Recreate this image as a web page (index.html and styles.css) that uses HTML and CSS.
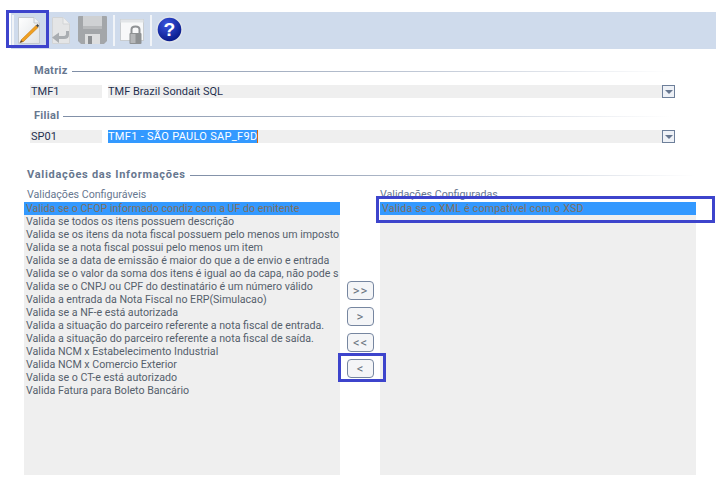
FILE: index.html
```html
<!DOCTYPE html>
<html lang="pt">
<head>
<meta charset="utf-8">
<title>Validações</title>
<link rel="stylesheet" href="styles.css">
</head>
<body>
<div class="page">
  <div class="toolbar">
    <span class="sep"></span>
    <svg class="tool tool-edit" width="22" height="27" viewBox="0 0 22 27">
      <defs><linearGradient id="pg" x1="0" y1="0" x2="1" y2="1"><stop offset="0" stop-color="#ffffff"/><stop offset="1" stop-color="#dfe3e6"/></linearGradient></defs>
      <path d="M.5 .5H16L21.500 6V26.500H.5Z" fill="url(#pg)" stroke="#c3c9cf"/>
      <path d="M16 .5V6H21.500" fill="#eef1f3" stroke="#c3c9cf"/>
      <path d="M3 23L18 8.500L20 10.500L5 25Z" fill="#f0a020" stroke="#c87a10" stroke-width=".6"/>
      <path d="M18 8.500L19.500 7L21 8.500L20 10.500Z" fill="#444"/>
      <path d="M1.500 26L3 23L5 25Z" fill="#6b4a20"/>
    </svg>
    <svg class="tool tool-undo" width="18" height="27" viewBox="0 0 18 27">
      <path d="M.5 .5H11L17.500 7V26.500H.5Z" fill="#e4e5e6" stroke="#d2d4d6"/>
      <path d="M11 .5V7H17.500" fill="#eeeeee" stroke="#d2d4d6"/>
      <path d="M17 14V18Q17 22 12 22H7V26L0 20.500L7 15.500V19H11Q14 19 14 17V14Z" fill="#a9adb1"/>
    </svg>
    <svg class="tool tool-save" width="29" height="28" viewBox="0 0 29 28">
      <path d="M0 1Q0 0 1 0H28Q29 0 29 1V25L26 28H3L0 25Z" fill="#a3a6a9"/>
      <rect x="5" y="0" width="19" height="13" fill="#cfd1d3"/>
      <rect x="5" y="10" width="19" height="3" fill="#b8babc"/>
      <rect x="7" y="18" width="15" height="10" fill="#dddedf"/>
      <rect x="10" y="20" width="4" height="8" fill="#8c8f92"/>
    </svg>
    <span class="sep"></span>
    <svg class="tool tool-lock" width="24" height="25" viewBox="0 0 24 25">
      <rect x=".5" y=".5" width="23" height="21" fill="#f7f8f9" stroke="#c8ccd0"/>
      <rect x=".5" y=".5" width="23" height="3" fill="#e2e5e8"/>
      <path d="M11.500 15V10.500Q11.500 7.500 15.500 7.500Q19.500 7.500 19.500 10.500V15" fill="none" stroke="#8f9295" stroke-width="2"/>
      <rect x="9.500" y="14" width="12" height="11" rx="1" fill="#8e9193"/>
      <rect x="10.500" y="15" width="5" height="9" fill="#b5b7b9"/>
    </svg>
    <span class="sep"></span>
    <svg class="tool tool-help" width="27" height="27" viewBox="0 0 28 28">
      <defs><radialGradient id="hb" cx=".4" cy=".3" r=".8"><stop offset="0" stop-color="#3a55e0"/><stop offset="1" stop-color="#00107a"/></radialGradient></defs>
      <circle cx="14" cy="14" r="13" fill="url(#hb)" stroke="#dfe4ec" stroke-width="1.500"/>
      <text class="help-mark" x="14" y="21" text-anchor="middle">?</text>
    </svg>
  </div>

  <div class="legend legend-matriz"><span class="legend-text">Matriz</span><span class="legend-line"></span></div>
  <div class="field">
    <div class="code">TMF1</div>
    <div class="value">TMF Brazil Sondait SQL</div>
    <div class="drop"><span class="arrow"></span></div>
  </div>

  <div class="legend legend-filial"><span class="legend-text">Filial</span><span class="legend-line"></span></div>
  <div class="field">
    <div class="code">SP01</div>
    <div class="value"><span class="picked">TMF1 - SÃO PAULO SAP_F9D</span></div>
    <div class="drop"><span class="arrow"></span></div>
  </div>

  <div class="legend legend-val"><span class="legend-text legend-wide">Validações das Informações</span><span class="legend-line"></span></div>

  <div class="lists">
    <div class="col">
      <div class="list-title list-title-left">Validações Configuráveis</div>
      <ul class="list">
        <li class="on">Valida se o CFOP informado condiz com a UF do emitente</li>
        <li>Valida se todos os itens possuem descrição</li>
        <li>Valida se os itens da nota fiscal possuem pelo menos um imposto</li>
        <li>Valida se a nota fiscal possui pelo menos um item</li>
        <li>Valida se a data de emissão é maior do que a de envio e entrada</li>
        <li>Valida se o valor da soma dos itens é igual ao da capa, não pode s</li>
        <li>Valida se o CNPJ ou CPF do destinatário é um número válido</li>
        <li>Valida a entrada da Nota Fiscal no ERP(Simulacao)</li>
        <li>Valida se a NF-e está autorizada</li>
        <li>Valida a situação do parceiro referente a nota fiscal de entrada.</li>
        <li>Valida a situação do parceiro referente a nota fiscal de saída.</li>
        <li>Valida NCM x Estabelecimento Industrial</li>
        <li>Valida NCM x Comercio Exterior</li>
        <li>Valida se o CT-e está autorizado</li>
        <li>Valida Fatura para Boleto Bancário</li>
      </ul>
    </div>
    <div class="moves">
      <button class="move" type="button">&gt;&gt;</button>
      <button class="move" type="button">&gt;</button>
      <button class="move" type="button">&lt;&lt;</button>
      <button class="move" type="button">&lt;</button>
    </div>
    <div class="col">
      <div class="list-title">Validações Configuradas</div>
      <ul class="list list-right">
        <li class="on">Valida se o XML é compatível com o XSD</li>
      </ul>
    </div>
  </div>

  <span class="mark mark-tool"></span>
  <span class="mark mark-row"></span>
  <span class="mark mark-btn"></span>
</div>
</body>
</html>
```
FILE: styles.css
```css
* { box-sizing: border-box; }
html, body { margin: 0; padding: 0; background: #fff; }
.page {
  position: relative;
  width: 724px;
  height: 489px;
  overflow: hidden;
  padding-top: 12px;
  font-family: Roboto, "Liberation Sans", Arial, sans-serif;
  font-size: 10.65px;
  color: #1f3050;
}
.toolbar {
  display: flex;
  align-items: center;
  height: 37px;
  margin: 0 8px 0 11px;
  background: #cfdbec;
  padding-left: 1px;
}
.sep { width: 2px; height: 31px; background: #f1f4f8; flex: none; }
.tool { flex: none; display: block; }
.tool-edit { margin-left: 4px; margin-top: -1px; }
.tool-undo { margin-left: 12px; margin-top: -1px; }
.tool-save { margin-left: 8px; margin-right: 6px; margin-top: -2px; }
.tool-lock { margin-left: 5px; margin-right: 6px; margin-top: 2px; }
.tool-help { margin-left: 4px; margin-top: -2px; }
.help-mark { font: bold 20px "Liberation Sans", Arial, sans-serif; fill: #fff; }

.legend {
  display: flex;
  align-items: center;
  height: 14px;
  color: #67778f;
  font-weight: bold;
  font-size: 11px;
}
.legend-text { letter-spacing: .3px; flex: none; }
.legend-wide { letter-spacing: .72px; }
.legend-line {
  height: 1px;
  margin-left: 4px;
  margin-top: 3px;
  flex: 1;
  background: linear-gradient(to right, #7f8ea6, #c3cbd8 60%, #fff);
}
.legend-matriz { margin: 14px 52px 0 34px; }
.legend-filial { margin: 10px 52px 0 34px; }
.legend-val { margin: 24px 29px 0 27px; }

.field {
  display: flex;
  height: 13px;
  margin: 8px 0 0 30px;
  width: 645px;
  font-size: 11px;
  line-height: 13px;
}
.code { width: 72px; background: #efefef; padding-left: 1px; flex: none; }
.value { width: 554px; margin-left: 6px; background: #efefef; flex: none; white-space: nowrap; }
.picked { display: inline-block; background: #3399ff; color: #fff; height: 13px; border-right: 1px solid #d26a10; letter-spacing: .3px; }
.drop {
  width: 13px;
  height: 13px;
  flex: none;
  background: #eef1f6;
  border: 1px solid #6d7f9a;
  display: flex;
  align-items: center;
  justify-content: center;
}
.arrow {
  width: 0;
  height: 0;
  border-left: 4px solid transparent;
  border-right: 4px solid transparent;
  border-top: 4px solid #67778f;
}

.lists {
  display: grid;
  grid-template-columns: 316px 40px 316px;
  margin: 6px 0 0 24px;
}
.col { display: flex; flex-direction: column; }
.list-title { height: 15px; line-height: 15px; color: #67778f; }
.list-title-left { padding-left: 3px; }
.list {
  list-style: none;
  margin: 0;
  padding: 0;
  height: 273px;
  background: #efefef;
  overflow: hidden;
}
.list-right { letter-spacing: .2px; }
.list li {
  height: 13px;
  line-height: 13px;
  padding-left: 2px;
  white-space: nowrap;
  color: #55606c;
  overflow: hidden;
}
.list li.on { background: #3399ff; color: #80705f; }
.moves {
  display: flex;
  flex-direction: column;
  align-items: flex-start;
  gap: 7px;
  padding: 94px 0 0 7px;
}
.move {
  width: 27px;
  height: 19px;
  padding: 0;
  background: #f4f5f7;
  border: 1px solid #7686a0;
  border-radius: 4px;
  color: #6a7480;
  font: 13px/15px Roboto, sans-serif;
  letter-spacing: 1px;
}

.mark { position: absolute; border: 3px solid #3d44cc; }
.mark-tool { left: 6px; top: 10px; width: 43px; height: 38px; }
.mark-row { left: 376px; top: 196px; width: 339px; height: 27px; }
.mark-btn { left: 338px; top: 353px; width: 48px; height: 29px; }
```
